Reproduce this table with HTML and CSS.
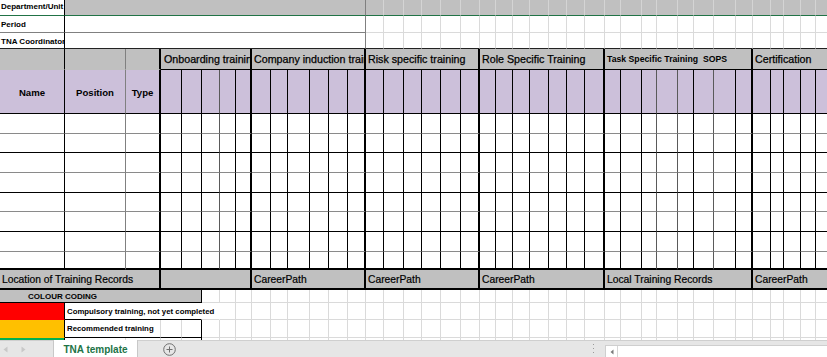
FILE: index.html
```html
<!DOCTYPE html>
<html>
<head>
<meta charset="utf-8">
<title>TNA template</title>
<link rel="stylesheet" href="styles.css">
</head>
<body>
<div class="app">
  <div class="sheet">
    <div class="row r1">
      <div class="t lbl">Department/Unit</div><div class="s13 m"></div>
      <span></span><span></span><span></span><span></span><span></span><span></span><span></span><span></span><span></span><span></span><span></span><span></span><span></span><span></span><span></span><span></span><span></span><span></span><span></span><span></span><span></span><span></span><span></span><span></span><span></span><span></span>
    </div>
    <div class="row r2">
      <div class="t lbl">Period</div><div class="s13 m"></div>
      <span></span><span></span><span></span><span></span><span></span><span></span><span></span><span></span><span></span><span></span><span></span><span></span><span></span><span></span><span></span><span></span><span></span><span></span><span></span><span></span><span></span><span></span><span></span><span></span><span></span><span></span>
    </div>
    <div class="row r3">
      <div class="t lbl">TNA Coordinator</div><div class="s13 m"></div>
      <span></span><span></span><span></span><span></span><span></span><span></span><span></span><span></span><span></span><span></span><span></span><span></span><span></span><span></span><span></span><span></span><span></span><span></span><span></span><span></span><span></span><span></span><span></span><span></span><span></span><span></span>
    </div>
    <div class="row r4">
      <div class="hl"></div><div class="hl g"></div><div class="hl k"></div>
      <div class="s5 grp t gh">Onboarding training</div>
      <div class="s6 grp t gh">Company induction training</div>
      <div class="s6 grp t gh">Risk specific training</div>
      <div class="s7 grp t gh">Role Specific Training</div>
      <div class="s8 grp t task">Task Specific Training  SOPS</div>
      <div class="s5 grp t gh">Certification</div>
    </div>
    <div class="row d r5">
      <div class="t nm">Name</div><div class="t nm">Position</div><div class="t nm">Type</div>
      <span></span><span></span><span></span><span></span><span></span><span></span><span></span><span></span><span></span><span></span><span></span><span></span><span></span><span></span><span></span><span></span><span></span><span></span><span></span><span></span><span></span><span></span><span></span><span></span><span></span><span></span><span></span><span></span><span></span><span></span><span></span><span></span><span></span><span></span><span></span><span></span><span></span>
    </div>
    <div class="row d alt h20"><span></span><span></span><span></span><span></span><span></span><span></span><span></span><span></span><span></span><span></span><span></span><span></span><span></span><span></span><span></span><span></span><span></span><span></span><span></span><span></span><span></span><span></span><span></span><span></span><span></span><span></span><span></span><span></span><span></span><span></span><span></span><span></span><span></span><span></span><span></span><span></span><span></span><span></span><span></span><span></span></div>
    <div class="row d h19"><span></span><span></span><span></span><span></span><span></span><span></span><span></span><span></span><span></span><span></span><span></span><span></span><span></span><span></span><span></span><span></span><span></span><span></span><span></span><span></span><span></span><span></span><span></span><span></span><span></span><span></span><span></span><span></span><span></span><span></span><span></span><span></span><span></span><span></span><span></span><span></span><span></span><span></span><span></span><span></span></div>
    <div class="row d alt h20"><span></span><span></span><span></span><span></span><span></span><span></span><span></span><span></span><span></span><span></span><span></span><span></span><span></span><span></span><span></span><span></span><span></span><span></span><span></span><span></span><span></span><span></span><span></span><span></span><span></span><span></span><span></span><span></span><span></span><span></span><span></span><span></span><span></span><span></span><span></span><span></span><span></span><span></span><span></span><span></span></div>
    <div class="row d h20"><span></span><span></span><span></span><span></span><span></span><span></span><span></span><span></span><span></span><span></span><span></span><span></span><span></span><span></span><span></span><span></span><span></span><span></span><span></span><span></span><span></span><span></span><span></span><span></span><span></span><span></span><span></span><span></span><span></span><span></span><span></span><span></span><span></span><span></span><span></span><span></span><span></span><span></span><span></span><span></span></div>
    <div class="row d alt h19"><span></span><span></span><span></span><span></span><span></span><span></span><span></span><span></span><span></span><span></span><span></span><span></span><span></span><span></span><span></span><span></span><span></span><span></span><span></span><span></span><span></span><span></span><span></span><span></span><span></span><span></span><span></span><span></span><span></span><span></span><span></span><span></span><span></span><span></span><span></span><span></span><span></span><span></span><span></span><span></span></div>
    <div class="row d h20"><span></span><span></span><span></span><span></span><span></span><span></span><span></span><span></span><span></span><span></span><span></span><span></span><span></span><span></span><span></span><span></span><span></span><span></span><span></span><span></span><span></span><span></span><span></span><span></span><span></span><span></span><span></span><span></span><span></span><span></span><span></span><span></span><span></span><span></span><span></span><span></span><span></span><span></span><span></span><span></span></div>
    <div class="row d alt h20"><span></span><span></span><span></span><span></span><span></span><span></span><span></span><span></span><span></span><span></span><span></span><span></span><span></span><span></span><span></span><span></span><span></span><span></span><span></span><span></span><span></span><span></span><span></span><span></span><span></span><span></span><span></span><span></span><span></span><span></span><span></span><span></span><span></span><span></span><span></span><span></span><span></span><span></span><span></span><span></span></div>
    <div class="row d last h18"><span></span><span></span><span></span><span></span><span></span><span></span><span></span><span></span><span></span><span></span><span></span><span></span><span></span><span></span><span></span><span></span><span></span><span></span><span></span><span></span><span></span><span></span><span></span><span></span><span></span><span></span><span></span><span></span><span></span><span></span><span></span><span></span><span></span><span></span><span></span><span></span><span></span><span></span><span></span><span></span></div>
    <div class="row loc">
      <div class="s3 t">Location of Training Records</div>
      <div class="s5 t"></div>
      <div class="s6 t">CareerPath</div>
      <div class="s6 t">CareerPath</div>
      <div class="s7 t">CareerPath</div>
      <div class="s8 t">Local Training Records</div>
      <div class="s5 t">CareerPath</div>
    </div>
    <div class="row cc">
      <div class="s5 t ccl">COLOUR CODING</div>
      <span></span><span></span><span></span><span></span><span></span><span></span><span></span><span></span><span></span><span></span><span></span><span></span><span></span><span></span><span></span><span></span><span></span><span></span><span></span><span></span><span></span><span></span><span></span><span></span><span></span><span></span><span></span><span></span><span></span><span></span><span></span><span></span><span></span><span></span><span></span>
    </div>
    <div class="row key1">
      <div class="sw red"></div><div class="s4 t note open">Compulsory training, not yet completed</div><div class="open"></div>
      <span></span><span></span><span></span><span></span><span></span><span></span><span></span><span></span><span></span><span></span><span></span><span></span><span></span><span></span><span></span><span></span><span></span><span></span><span></span><span></span><span></span><span></span><span></span><span></span><span></span><span></span><span></span><span></span><span></span><span></span><span></span><span></span><span></span><span></span>
    </div>
    <div class="row key2">
      <div class="sw yel"></div><div class="s2 t note boxb">Recommended training</div><div class="boxb"></div><div class="boxb boxr"></div>
      <span></span><span></span><span></span><span></span><span></span><span></span><span></span><span></span><span></span><span></span><span></span><span></span><span></span><span></span><span></span><span></span><span></span><span></span><span></span><span></span><span></span><span></span><span></span><span></span><span></span><span></span><span></span><span></span><span></span><span></span><span></span><span></span><span></span><span></span><span></span>
    </div>
    <div class="row key3">
      <div class="sw grn"></div><div></div><div></div><div></div><div class="boxr"></div>
      <span></span><span></span><span></span><span></span><span></span><span></span><span></span><span></span><span></span><span></span><span></span><span></span><span></span><span></span><span></span><span></span><span></span><span></span><span></span><span></span><span></span><span></span><span></span><span></span><span></span><span></span><span></span><span></span><span></span><span></span><span></span><span></span><span></span><span></span><span></span>
    </div>
  </div>
  <div class="tabbar">
    <div class="nav">
      <svg width="5" height="7" viewBox="0 0 5 7"><path d="M4.5 0.5v6L0.5 3.5z" fill="#c8c8c8"/></svg>
      <svg width="5" height="7" viewBox="0 0 5 7"><path d="M0.5 0.5v6l4-3z" fill="#c8c8c8"/></svg>
    </div>
    <div class="tab">TNA template</div>
    <div class="add">
      <svg width="13" height="13" viewBox="0 0 13 13"><circle cx="6.5" cy="6.5" r="5.8" fill="none" stroke="#6f6f6f" stroke-width="1"/><path d="M6.5 3.5v6M3.5 6.5h6" stroke="#6f6f6f" stroke-width="1"/></svg>
    </div>
    <div class="spacer"></div>
    <div class="dots">
      <svg width="3" height="10" viewBox="0 0 3 10"><rect x="1" y="0" width="1" height="1" fill="#9a9a9a"/><rect x="1" y="4" width="1" height="1" fill="#9a9a9a"/><rect x="1" y="8" width="1" height="1" fill="#9a9a9a"/></svg>
    </div>
    <div class="hscroll">
      <div class="sbtn"><svg width="4" height="6" viewBox="0 0 4 6"><path d="M3.5 0.5v5L0.5 3z" fill="#7a7a7a"/></svg></div>
      <div class="track"></div>
    </div>
  </div>
</div>
</body>
</html>
```

FILE: styles.css
```css
* { box-sizing: border-box; margin: 0; padding: 0; }
html, body { width: 827px; height: 357px; overflow: hidden; background: #fff; }
body { font-family: "Liberation Sans", Arial, sans-serif; color: #000; }

.app { display: flex; flex-direction: column; height: 357px; }
.sheet { flex: 1; min-height: 0; overflow: hidden; display: flex; flex-direction: column; }

.row {
  --cols: 65px 61px 35px 21px 20px 18px 16px 16px 19px 17px 22px 19px 19px 18px 18px 20px 18px 19px 20px 19px 16px 17px 17px 19px 18px 18px 20px 16px 21px 15px 21px 16px 20px 22px 17px 18px 13px 17px 15px 20px;
  display: grid;
  grid-template-columns: var(--cols);
  width: 836px;
  flex: none;
}
.row > * {
  min-width: 0;
  white-space: nowrap;
  border-right: 1px solid #dadada;
  border-bottom: 1px solid #dadada;
}

.s2 { grid-column: span 2; }
.s3 { grid-column: span 3; }
.s4 { grid-column: span 4; }
.s5 { grid-column: span 5; }
.s6 { grid-column: span 6; }
.s7 { grid-column: span 7; }
.s8 { grid-column: span 8; }
.s13 { grid-column: span 13; }

.t { display: flex; align-items: center; padding-left: 2px; overflow: hidden; }

/* top info rows */
.lbl { font-weight: bold; font-size: 8px; padding-left: 1px; }
.r1 { height: 16px; }
.r1 > * { background: #c0c0c0; border-right-color: #d4d4d4; border-bottom-color: #217346; }
.r1 > .lbl { background: #fff; border-right-color: #000; align-items: flex-start; padding-top: 2px; }
.r1 > .m { border-right-color: #808080; }

.r2 { height: 17px; }
.r2 > .lbl { border-right-color: #000; border-bottom-color: #808080; padding-top: 1px; }
.r2 > .m { border-right-color: #808080; border-bottom-color: #808080; }

.r3 { height: 16px; }
.r3 > * { border-bottom-color: #222; }
.r3 > .lbl { border-right-color: #000; padding-top: 1px; }
.r3 > .m { border-right-color: #808080; }

/* group header row */
.r4 { height: 21px; }
.r4 > * { background: #c0c0c0; border-right: 1px solid #000; border-bottom: 1px solid #000; }
.r4 > .hl { border-bottom-color: #c0c0c0; }
.r4 > .g { border-right-color: #808080; }
.r4 > .k, .r4 > .grp { border-right-width: 2px; }
.gh { font-size: 10.7px; -webkit-text-stroke: 0.25px #000; }
.task { font-weight: bold; font-size: 8.7px; white-space: pre; }
.grp.t { padding-left: 2px; }
.r4 > .grp:nth-child(4) { padding-left: 3px; }

/* bordered block */
.d > * { border-right: 1px solid #000; border-bottom: 1px solid #000; }
.d > :nth-child(2) { border-right-color: #808080; }
.d > :nth-child(6), .d > :nth-child(30), .d > :nth-child(31), .d > :nth-child(33) { border-right-color: #5a5a5a; }
.d > :nth-child(3), .d > :nth-child(8), .d > :nth-child(14),
.d > :nth-child(20), .d > :nth-child(27), .d > :nth-child(35) { border-right-width: 2px; }
.d.alt > * { border-bottom-color: #8a8a8a; }
.d.last > * { border-bottom-width: 2px; }

.r5 { height: 44px; }
.r5 > * { background: #ccc0da; }
.nm { justify-content: center; padding: 1px 0 0; font-weight: bold; font-size: 9.6px; }

.h20 { height: 20px; }
.h19 { height: 19px; }
.h18 { height: 18px; }

/* location row */
.loc { height: 20px; }
.loc > * { background: #c0c0c0; border-right: 2px solid #000; border-bottom: 2px solid #000; font-size: 10.3px; -webkit-text-stroke: 0.2px #000; }

/* colour key */
.cc { height: 13px; }
.cc > .ccl { background: #c0c0c0; border-right-color: #000; border-bottom-color: #000; justify-content: center; padding: 0 76px 0 0; font-weight: bold; font-size: 8px; }

.key1 { height: 17px; }
.key2 { height: 18px; }
.key3 { height: 20px; }
.sw { border-right-color: #000 !important; border-bottom-color: transparent !important; }
.red { background: #ff0000; }
.yel { background: #ffc000; }
.grn { background: #00b050; }
.note { font-weight: bold; font-size: 7.8px; padding-left: 2px; overflow: visible; }
.key1 > .note { border-bottom-color: #000; }
.key1 > .open { border-right-color: transparent; }
.boxb { border-bottom-color: #000 !important; }
.boxr { border-right-color: #000 !important; }

/* sheet tabs */
.tabbar {
  flex: none;
  height: 17px;
  display: flex;
  background: #e6e6e6;
  border-top: 1px solid #cfcfcf;
  font-family: "Liberation Sans", Arial, sans-serif;
}
.nav { width: 53px; display: flex; align-items: center; gap: 13px; padding-left: 3px; }
.tab {
  width: 85px;
  margin-top: -1px;
  background: #fff;
  border-left: 1px solid #c8c8c8;
  border-right: 1px solid #c8c8c8;
  color: #217346;
  font-weight: bold;
  font-size: 10px;
  display: flex;
  align-items: center;
  justify-content: center;
  padding-top: 1px;
}
.add { width: 44px; display: flex; align-items: center; padding-left: 25px; }
.spacer { flex: 1; }
.dots { width: 10px; display: flex; align-items: center; justify-content: center; margin-right: 7px; }
.hscroll {
  width: 222px;
  flex: none;
  margin-top: 4px;
  display: flex;
  background: #fff;
  border-top: 1px solid #cfcfcf;
  border-left: 1px solid #cfcfcf;
}
.sbtn { width: 12px; border-right: 1px solid #d6d6d6; display: flex; align-items: center; justify-content: center; }
.track { flex: 1; }
```
